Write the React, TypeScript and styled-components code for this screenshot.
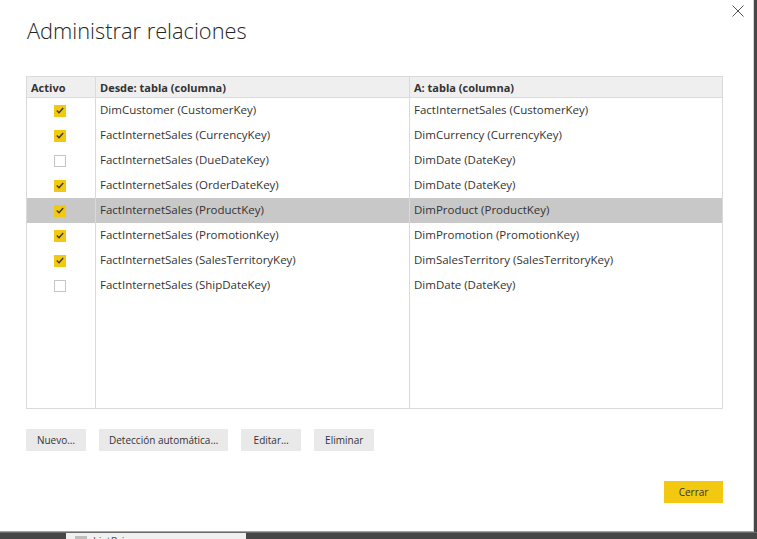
import React from "react";
import styled, { createGlobalStyle } from "styled-components";

const Global = createGlobalStyle`
  html, body { margin: 0; padding: 0; }
  body {
    background: #474747;
    font-family: "Open Sans", "Noto Sans", sans-serif;
    overflow: hidden;
  }
`;

const Screen = styled.div`
  width: 757px;
  height: 539px;
  display: flex;
  flex-direction: column;
  background: #474747;
  overflow: hidden;
`;

const Dialog = styled.div`
  width: 754px;
  height: 532px;
  box-sizing: border-box;
  background: #ffffff;
  border-right: 1px solid #d4d4d4;
  border-bottom: 1px solid #a6a6a6;
  display: flex;
  flex-direction: column;
  flex-shrink: 0;
`;

const Header = styled.div`
  display: flex;
  justify-content: space-between;
  align-items: flex-start;
  height: 76px;
  box-sizing: border-box;
  padding: 0 8px 0 27px;
`;

const Title = styled.h1`
  margin: 16px 0 0 0;
  font-family: "Open Sans", sans-serif;
  font-weight: 300;
  font-size: 21.8px;
  line-height: 30px;
  color: #252423;
`;

const CloseButton = styled.button`
  margin-top: 4px;
  width: 14px;
  height: 14px;
  padding: 0;
  border: none;
  background: transparent;
  display: flex;
  align-items: center;
  justify-content: center;
  cursor: pointer;
`;

const Grid = styled.div`
  margin: 0 30px 0 26px;
  height: 333px;
  box-sizing: border-box;
  border: 1px solid #dadada;
  display: grid;
  grid-template-columns: 69px 314px 1fr;
  grid-template-rows: 21px repeat(8, 25px) 1fr;
  font-size: 11.5px;
  color: #333333;
`;

const HeadCell = styled.div<{ $last?: boolean }>`
  background: #efefef;
  border-right: ${(p) => (p.$last ? "none" : "1px solid #dadada")};
  border-bottom: 1px solid #dadada;
  display: flex;
  align-items: center;
  padding-left: 4px;
  font-weight: 700;
  font-size: 11px;
  color: #333333;
`;

const Cell = styled.div<{ $selected?: boolean; $last?: boolean; $center?: boolean }>`
  background: ${(p) => (p.$selected ? "#c8c8c8" : "transparent")};
  border-right: ${(p) => (p.$last ? "none" : "1px solid #dadada")};
  display: flex;
  align-items: center;
  justify-content: ${(p) => (p.$center ? "center" : "flex-start")};
  padding-left: ${(p) => (p.$center ? "0" : "4px")};
  padding-bottom: 2px;
  box-sizing: border-box;
  white-space: nowrap;
  overflow: hidden;
`;

const Box = styled.span<{ $checked: boolean }>`
  width: 12px;
  height: 12px;
  box-sizing: border-box;
  background: ${(p) => (p.$checked ? "#f2c811" : "#ffffff")};
  border: ${(p) => (p.$checked ? "none" : "1px solid #c6c6c6")};
  display: flex;
  align-items: center;
  justify-content: center;
  margin-top: 2px;
  margin-right: 2px;
`;

const Buttons = styled.div`
  display: flex;
  gap: 13px;
  padding: 20px 0 0 26px;
`;

const Btn = styled.button<{ $primary?: boolean }>`
  height: 22px;
  min-width: ${(p) => (p.$primary ? "59px" : "60px")};
  padding: 0 10px;
  border: none;
  background: ${(p) => (p.$primary ? "#f2c811" : "#e9e9e9")};
  color: #333333;
  font-family: "Open Sans", sans-serif;
  font-size: 10px;
  display: flex;
  align-items: center;
  justify-content: center;
  cursor: pointer;
`;

const Footer = styled.div`
  display: flex;
  justify-content: flex-end;
  padding: 30px 30px 0 0;
`;

const Taskbar = styled.div`
  flex: 1;
  display: flex;
  padding-left: 66px;
  border-top: 1px solid #6a6a6a;
`;

const TaskTab = styled.div`
  width: 180px;
  background: #f0f0f0;
  display: flex;
  align-items: flex-start;
  gap: 6px;
  padding: 2px 0 0 9px;
  box-sizing: border-box;
  font-size: 11px;
  color: #555;
  overflow: hidden;
  line-height: 12px;
`;

const TabIcon = styled.span`
  width: 12px;
  height: 10px;
  background: #bdbdbd;
  margin-top: 1px;
`;

type Rel = { active: boolean; from: string; to: string; selected?: boolean };

const rels: Rel[] = [
  { active: true, from: "DimCustomer (CustomerKey)", to: "FactInternetSales (CustomerKey)" },
  { active: true, from: "FactInternetSales (CurrencyKey)", to: "DimCurrency (CurrencyKey)" },
  { active: false, from: "FactInternetSales (DueDateKey)", to: "DimDate (DateKey)" },
  { active: true, from: "FactInternetSales (OrderDateKey)", to: "DimDate (DateKey)" },
  { active: true, from: "FactInternetSales (ProductKey)", to: "DimProduct (ProductKey)", selected: true },
  { active: true, from: "FactInternetSales (PromotionKey)", to: "DimPromotion (PromotionKey)" },
  { active: true, from: "FactInternetSales (SalesTerritoryKey)", to: "DimSalesTerritory (SalesTerritoryKey)" },
  { active: false, from: "FactInternetSales (ShipDateKey)", to: "DimDate (DateKey)" },
];

const Check = () => (
  <svg width="8" height="7" viewBox="0 0 8 7">
    <path d="M0.8 3.6 L3 5.7 L7.2 1" fill="none" stroke="#3a3a3a" strokeWidth="1.4" />
  </svg>
);

export default function App() {
  return (
    <>
      <Global />
      <Screen>
        <Dialog>
          <Header>
            <Title>Administrar relaciones</Title>
            <CloseButton aria-label="Cerrar">
              <svg width="12" height="12" viewBox="0 0 12 12">
                <path d="M0.5 0.5 L11.5 11.5 M11.5 0.5 L0.5 11.5" stroke="#555" strokeWidth="1" fill="none" />
              </svg>
            </CloseButton>
          </Header>
          <Grid>
            <HeadCell>Activo</HeadCell>
            <HeadCell>Desde: tabla (columna)</HeadCell>
            <HeadCell $last>A: tabla (columna)</HeadCell>
            {rels.map((r, i) => (
              <React.Fragment key={i}>
                <Cell $center $selected={r.selected}>
                  <Box $checked={r.active}>{r.active && <Check />}</Box>
                </Cell>
                <Cell $selected={r.selected}>{r.from}</Cell>
                <Cell $selected={r.selected} $last>{r.to}</Cell>
              </React.Fragment>
            ))}
            <Cell />
            <Cell />
            <Cell $last />
          </Grid>
          <Buttons>
            <Btn>Nuevo…</Btn>
            <Btn>Detección automática…</Btn>
            <Btn>Editar…</Btn>
            <Btn>Eliminar</Btn>
          </Buttons>
          <Footer>
            <Btn $primary>Cerrar</Btn>
          </Footer>
        </Dialog>
        <Taskbar>
          <TaskTab>
            <TabIcon />
            ListPri
          </TaskTab>
        </Taskbar>
      </Screen>
    </>
  );
}
